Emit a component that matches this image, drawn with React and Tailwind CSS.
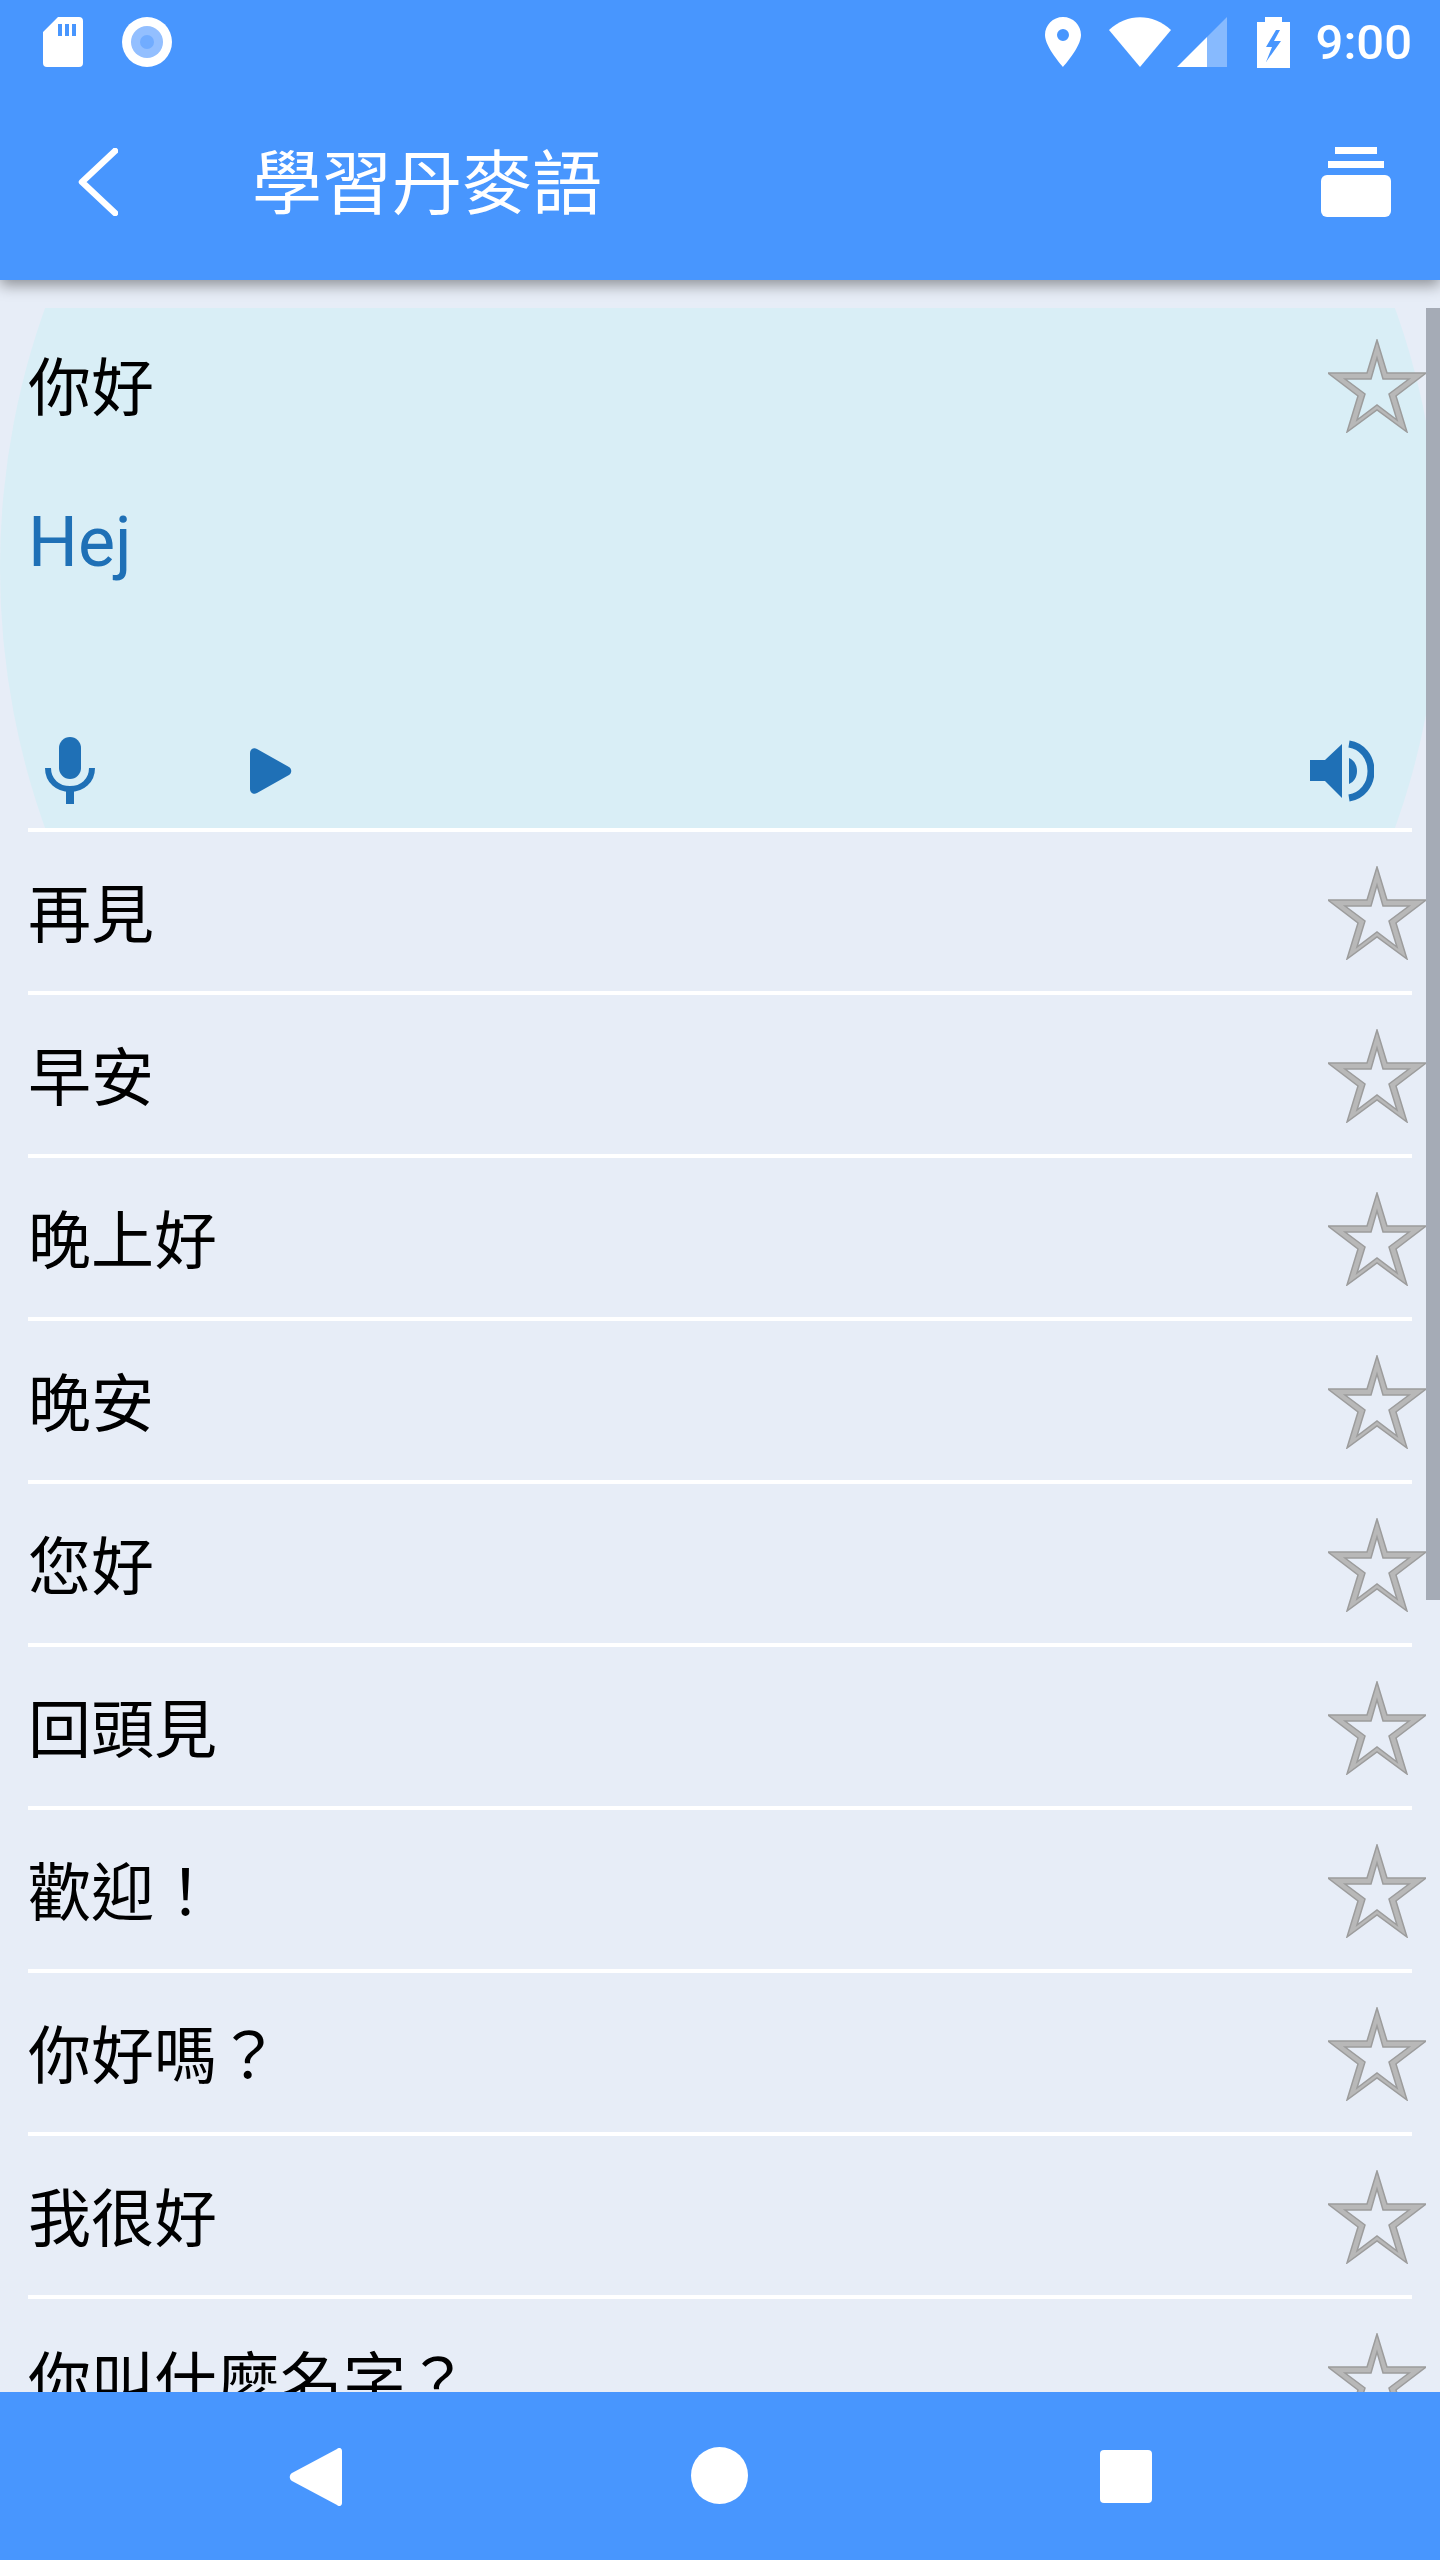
import React from 'react';

const phrases = ['再見', '早安', '晚上好', '晚安', '您好', '回頭見', '歡迎！', '你好嗎？', '我很好', '你叫什麼名字？'];

function Star({ className = '' }) {
  return (
    <svg width="98" height="94" viewBox="0 0 98 94" className={`shrink-0 ${className}`}>
      <path
        fillRule="evenodd"
        d="M49 1 L59 34 L98 34 L68 57 L79 93 L49 71 L19 93 L30 57 L0 34 L39 34 Z M49 19 L43 40 L17 40 L37 55 L29 81 L49 66 L69 81 L61 55 L81 40 L55 40 Z"
        fill="#b8b8b8"
        stroke="#9c9c9c"
        strokeWidth="1.5"
      />
    </svg>
  );
}

function StatusBar() {
  return (
    <div className="flex h-[84px] items-start justify-between pt-[17px] pl-[43px] pr-[28px]">
      <div className="flex items-start gap-[39px]">
        <svg width="40" height="50" viewBox="0 0 40 50">
          <path fill="white" fillRule="evenodd" d="M15 0 H36 a4 4 0 0 1 4 4 V46 a4 4 0 0 1 -4 4 H4 a4 4 0 0 1 -4 -4 V15 Z M15 7 V19 H19 V7 Z M22 7 V19 H26 V7 Z M29 7 V19 H33 V7 Z" />
        </svg>
        <svg width="50" height="50" viewBox="0 0 50 50">
          <circle cx="25" cy="25" r="25" fill="white" />
          <circle cx="25" cy="25" r="16" fill="#93bfff" />
          <circle cx="25" cy="25" r="7" fill="#71acff" />
        </svg>
      </div>
      <div className="flex items-start">
        <svg width="36" height="50" viewBox="0 0 36 50">
          <path fill="white" fillRule="evenodd" d="M18 0 C8 0 0 8 0 18 C0 30 18 50 18 50 C18 50 36 30 36 18 C36 8 28 0 18 0 Z M18 12 a6 6 0 1 1 0 12 a6 6 0 1 1 0 -12 Z" />
        </svg>
        <svg width="62" height="50" viewBox="0 0 62 50" className="ml-[28px]">
          <path fill="white" d="M0 13 C18 -4 44 -4 62 13 L31 50 Z" />
        </svg>
        <svg width="50" height="50" viewBox="0 0 50 50" className="ml-[6px]">
          <path fill="white" fillOpacity="0.35" d="M50 0 V50 H30 V20 Z" />
          <path fill="white" d="M30 20 V50 H0 Z" />
        </svg>
        <svg width="33" height="51" viewBox="0 0 33 51" className="ml-[30px]">
          <path fill="white" fillRule="evenodd" d="M8 0 H25 V5 H33 V51 H0 V5 H8 Z M19 13 L9 30 H15 L9 45 L24 24 H17 L23 13 Z" />
        </svg>
        <span className="ml-[26px] mt-[1px] font-['Roboto',sans-serif] text-[49px] font-medium leading-[50px] text-white">9:00</span>
      </div>
    </div>
  );
}

function Toolbar() {
  return (
    <div className="flex h-[196px] items-start pl-[78px] pr-[49px]">
      <svg width="40" height="68" viewBox="0 0 40 68" className="mt-[64px]">
        <path d="M37 3 L4 34 L37 65" fill="none" stroke="white" strokeWidth="6.5" strokeLinecap="round" strokeLinejoin="round" />
      </svg>
      <h1 className="ml-[134px] mt-[55px] font-['Noto_Sans_CJK_TC',sans-serif] text-[70px] font-normal leading-[80px] text-white">學習丹麥語</h1>
      <div className="ml-auto mt-[63px] flex w-[70px] flex-col items-center gap-[7px]">
        <div className="h-[7px] w-[42px] bg-white" />
        <div className="h-[7px] w-[56px] bg-white" />
        <div className="h-[42px] w-[70px] rounded-[6px] bg-white" />
      </div>
    </div>
  );
}

function ActiveCard() {
  return (
    <div className="relative h-[520px]">
      <div className="absolute inset-0 bg-[#d9eef6] [clip-path:ellipse(720px_747px_at_50%_50%)]" />
      <div className="relative flex h-full flex-col">
        <div className="flex h-[155px] items-center justify-between pl-[28px] pr-[14px]">
          <span className="mt-[-5px] font-['Noto_Sans_CJK_TC',sans-serif] text-[63px] leading-[80px] text-black">你好</span>
          <Star />
        </div>
        <div className="mt-[39px] pl-[28px] font-['Roboto',sans-serif] text-[70px] leading-[80px] text-[#1f70b6]">Hej</div>
        <div className="mt-auto flex items-center pb-[24px] pl-[45px] pr-[66px]">
          <svg width="50" height="67" viewBox="0 0 50 67">
            <rect x="14" y="0" width="22" height="42" rx="11" fill="#1f70b6" />
            <path d="M3 31 C3 44 13 52 25 52 C37 52 47 44 47 31" fill="none" stroke="#1f70b6" strokeWidth="6" />
            <rect x="21" y="52" width="8" height="15" fill="#1f70b6" />
          </svg>
          <svg width="42" height="46" viewBox="0 0 42 46" className="ml-[155px]">
            <path d="M0 5 C0 1 4 -1 7 1 L39 19 C42 21 42 25 39 27 L7 45 C4 47 0 45 0 41 Z" fill="#1f70b6" />
          </svg>
          <svg width="64" height="62" viewBox="0 0 64 62" className="ml-auto">
            <path d="M0 20 H15 L32 4 V58 L15 41 H0 Z" fill="#1f70b6" />
            <path d="M39 18 C44 20 47 25 47 31 C47 37 44 42 39 44 Z" fill="#1f70b6" />
            <path d="M39 4 C52 6 61 17 61 31 C61 45 52 56 39 58" fill="none" stroke="#1f70b6" strokeWidth="7" />
          </svg>
        </div>
      </div>
    </div>
  );
}

function PhraseRow({ text }) {
  return (
    <div>
      <div className="mx-[28px] h-[4px] bg-white" />
      <div className="flex h-[159px] items-center justify-between pl-[28px] pr-[14px]">
        <span className="mt-[-3px] font-['Noto_Sans_CJK_TC',sans-serif] text-[63px] leading-[80px] text-black">{text}</span>
        <Star className="mt-[2px]" />
      </div>
    </div>
  );
}

export default function App() {
  return (
    <div className="flex h-[2560px] w-[1440px] flex-col overflow-hidden bg-[#e7edf7]">
      <header className="relative z-10 h-[280px] shrink-0 bg-[#4896fe] shadow-[0_5px_14px_rgba(0,0,0,0.4)]">
        <StatusBar />
        <Toolbar />
      </header>

      <main className="relative min-h-0 flex-1 overflow-hidden pt-[28px]">
        <ActiveCard />
        {phrases.map((p) => (
          <PhraseRow key={p} text={p} />
        ))}
        <div className="absolute right-0 top-[28px] h-[1292px] w-[14px] bg-[#a5abb6]" />
      </main>

      <nav className="relative z-10 flex h-[168px] shrink-0 items-start bg-[#4896fe] pl-[289px] pt-[55px]">
        <svg width="53" height="58" viewBox="0 0 53 58" className="mt-[1px]">
          <path d="M53 3 C53 0 50 -1 48 1 L3 25 C0 27 0 31 3 33 L48 57 C50 59 53 58 53 55 Z" fill="white" />
        </svg>
        <div className="ml-[349px] h-[57px] w-[57px] rounded-full bg-white" />
        <div className="ml-[352px] mt-[3px] h-[53px] w-[52px] rounded-[4px] bg-white" />
      </nav>
    </div>
  );
}
